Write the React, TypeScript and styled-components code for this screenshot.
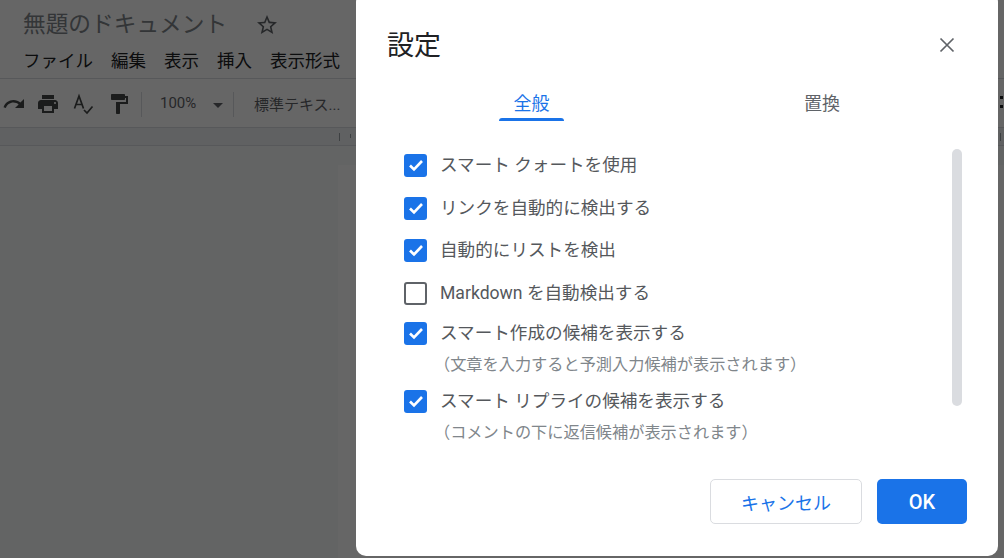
import styled, { createGlobalStyle } from "styled-components"

const GlobalStyle = createGlobalStyle`
  html, body {
    margin: 0;
    padding: 0;
    height: 100%;
    overflow: hidden;
    background: #fff;
    font-family: Roboto, "Noto Sans CJK JP", sans-serif;
  }
  #root {
    height: 100%;
  }
`

const Page = styled.div`
  position: relative;
  width: 1004px;
  height: 558px;
  overflow: hidden;
  display: flex;
  flex-direction: column;
`

const Header = styled.header`
  height: 79px;
  flex: none;
  box-sizing: border-box;
  padding: 10px 0 0 23px;
  border-bottom: 1px solid #dadce0;
`

const TitleRow = styled.div`
  display: flex;
  align-items: center;
  gap: 28px;
  height: 30px;
`

const DocTitle = styled.div`
  font-size: 22.7px;
  line-height: 30px;
  color: #80868b;
`

const MenuRow = styled.nav`
  display: flex;
  gap: 18px;
  margin-top: 8px;
`

const MenuItem = styled.span`
  font-size: 17.5px;
  line-height: 26px;
  color: #202124;
`

const Toolbar = styled.div`
  height: 49px;
  flex: none;
  box-sizing: border-box;
  padding: 2px 0 0 2px;
  display: flex;
  align-items: center;
  color: #444746;
  border-bottom: 1px solid #dadce0;
`

const ToolIcon = styled.svg<{ $gap: number }>`
  width: 24px;
  height: 24px;
  flex: none;
  margin-right: ${(p) => p.$gap}px;
  fill: currentColor;
`

const Divider = styled.div`
  width: 1px;
  height: 25px;
  background: #dadce0;
`

const Zoom = styled.span`
  font-size: 15px;
  color: #5f6368;
  margin: 0 0 2px 18px;
  width: 44px;
`

const Caret = styled.i`
  width: 0;
  height: 0;
  margin: 2px 10px 0 9px;
  border-left: 5px solid transparent;
  border-right: 5px solid transparent;
  border-top: 5px solid #5f6368;
`

const StyleLabel = styled.span`
  font-size: 15px;
  color: #5f6368;
  margin: 0 0 2px 20px;
  white-space: nowrap;
`

const MoreDots = styled.i`
  margin: 0 1px 5px auto;
  width: 3px;
  height: 18px;
  background: radial-gradient(circle, #202124 1.5px, transparent 1.6px) 0 0 / 3px 9px repeat-y;
`

const Ruler = styled.div`
  height: 18px;
  flex: none;
  box-sizing: border-box;
  background: #f1f3f4;
  border-bottom: 1px solid #dadce0;
  display: flex;
  padding-left: 339px;
`

const RulerTick = styled.i<{ $short?: boolean; $end?: boolean }>`
  width: 1px;
  height: ${(p) => (p.$short ? 4 : 8)}px;
  margin-top: ${(p) => (p.$short ? 6 : 5)}px;
  margin-left: ${(p) => (p.$short ? 10 : p.$end ? 649 : 0)}px;
  background: #9aa0a6;
`

const Canvas = styled.main`
  flex: 1;
  background: #f8f9fa;
  padding: 19px 0 0 338px;
`

const Sheet = styled.div`
  height: 100%;
  background: #fff;
`

const Scrim = styled.div`
  position: absolute;
  inset: 0;
  background: rgba(0, 0, 0, 0.6);
`

const Dialog = styled.section`
  position: absolute;
  left: 356px;
  top: -8px;
  width: 642px;
  height: 564px;
  box-sizing: border-box;
  padding: 8px 0 0;
  background: #fff;
  border-radius: 10px;
  display: flex;
  flex-direction: column;
`

const DialogHead = styled.div`
  display: flex;
  align-items: center;
  justify-content: space-between;
  height: 90px;
  flex: none;
  padding: 0 41px 0 31px;
`

const DialogTitle = styled.h2`
  margin: 2px 0 0;
  font-size: 27px;
  line-height: 36px;
  font-weight: 400;
  color: #202124;
`

const CloseButton = styled.button`
  width: 20px;
  height: 20px;
  padding: 0;
  border: none;
  background: none;
  color: #5f6368;
  display: flex;
`

const Tabs = styled.div`
  display: grid;
  grid-template-columns: 176px 290px;
  flex: none;
  height: 31px;
  margin-left: 88px;
`

const Tab = styled.div<{ $active?: boolean }>`
  position: relative;
  text-align: center;
  font-size: 18px;
  line-height: 28px;
  color: ${(p) => (p.$active ? "#1a73e8" : "#5f6368")};
  ${(p) => (p.$active ? "width: 65px; margin-left: 55px;" : "width: 36px; margin-left: 184px;")}

  &::after {
    content: "";
    display: ${(p) => (p.$active ? "block" : "none")};
    position: absolute;
    left: 0;
    right: 0;
    bottom: 0;
    height: 3px;
    background: #1a73e8;
    border-radius: 3px 3px 0 0;
  }
`

const Body = styled.div`
  position: relative;
  height: 317px;
  flex: none;
  box-sizing: border-box;
  padding: 31px 0 0 48px;
`

const ScrollThumb = styled.div`
  position: absolute;
  left: 596px;
  top: 28px;
  width: 10px;
  height: 257px;
  border-radius: 5px;
  background: #dadce0;
`

const OptionList = styled.div`
  display: flex;
  flex-direction: column;
`

const Option = styled.div<{ $gap: number }>`
  display: flex;
  align-items: center;
  gap: 13px;
  height: 26px;
  margin-bottom: ${(p) => p.$gap}px;
`

const Box = styled.span<{ $checked: boolean }>`
  width: 23px;
  height: 23px;
  flex: none;
  box-sizing: border-box;
  border-radius: 3px;
  display: flex;
  align-items: center;
  justify-content: center;
  background: ${(p) => (p.$checked ? "#1a73e8" : "#fff")};
  border: ${(p) => (p.$checked ? "none" : "2px solid #5f6368")};
`

const Label = styled.span`
  font-size: 17.6px;
  line-height: 26px;
  color: #55585c;
  white-space: nowrap;
`

const Hint = styled.div<{ $gap: number }>`
  font-size: 16.2px;
  line-height: 20px;
  color: #80868b;
  margin: 9px 0 ${(p) => p.$gap}px 30px;
  white-space: nowrap;
`

const Footer = styled.div`
  display: flex;
  justify-content: flex-end;
  gap: 15px;
  padding: 41px 31px 0 0;
`

const ButtonBase = styled.button`
  height: 45px;
  box-sizing: border-box;
  border-radius: 5px;
  font-family: inherit;
`

const CancelButton = styled(ButtonBase)`
  width: 152px;
  background: #fff;
  border: 1px solid #dadce0;
  color: #1a73e8;
  font-size: 18px;
`

const OkButton = styled(ButtonBase)`
  width: 90px;
  background: #1a73e8;
  border: none;
  color: #fff;
  font-size: 20px;
  font-weight: 500;
`

const options = [
  { label: "スマート クォートを使用", gap: 17 },
  { label: "リンクを自動的に検出する", gap: 16 },
  { label: "自動的にリストを検出", gap: 17 },
  { label: "Markdown を自動検出する", off: true, gap: 14 },
  { label: "スマート作成の候補を表示する", hint: "（文章を入力すると予測入力候補が表示されます）", gap: 13 },
  { label: "スマート リプライの候補を表示する", hint: "（コメントの下に返信候補が表示されます）", gap: 0 },
]

export default function App() {
  return (
    <Page>
      <GlobalStyle />
      <Header>
        <TitleRow>
          <DocTitle>無題のドキュメント</DocTitle>
          <svg width="24" height="24" viewBox="0 0 24 24" fill="#5f6368">
            <path d="M22 9.24l-7.19-.62L12 2 9.19 8.63 2 9.24l5.46 4.73L5.82 21 12 17.27 18.18 21l-1.63-7.03L22 9.24zM12 15.4l-3.76 2.27 1-4.28-3.32-2.88 4.38-.38L12 6.1l1.71 4.04 4.38.38-3.32 2.88 1 4.28L12 15.4z" />
          </svg>
        </TitleRow>
        <MenuRow>
          <MenuItem>ファイル</MenuItem>
          <MenuItem>編集</MenuItem>
          <MenuItem>表示</MenuItem>
          <MenuItem>挿入</MenuItem>
          <MenuItem>表示形式</MenuItem>
        </MenuRow>
      </Header>
      <Toolbar>
        <ToolIcon $gap={10} viewBox="0 0 24 24">
          <path d="M18.4 10.6C16.55 8.99 14.15 8 11.5 8c-4.65 0-8.58 3.03-9.96 7.22L3.9 16c1.05-3.19 4.05-5.5 7.6-5.5 1.95 0 3.73.72 5.12 1.88L13 16h9V7l-3.6 3.6z" />
        </ToolIcon>
        <ToolIcon $gap={11} viewBox="0 0 24 24">
          <path d="M19 8H5c-1.66 0-3 1.34-3 3v6h4v4h12v-4h4v-6c0-1.66-1.34-3-3-3zm-3 11H8v-5h8v5zm3-7c-.55 0-1-.45-1-1s.45-1 1-1 1 .45 1 1-.45 1-1 1zm-1-9H6v4h12V3z" />
        </ToolIcon>
        <ToolIcon $gap={12} viewBox="0 0 24 24">
          <g fill="none" stroke="currentColor" strokeWidth="1.7">
            <path d="M3.5 16.5L8 4l4.5 12.5M5 12.5h6" />
            <path d="M13 18l3 3 5.5-6.5" />
          </g>
        </ToolIcon>
        <ToolIcon $gap={10} viewBox="0 0 24 24">
          <path d="M18 4V3c0-.55-.45-1-1-1H5c-.55 0-1 .45-1 1v4c0 .55.45 1 1 1h12c.55 0 1-.45 1-1V6h1v4H9v11c0 .55.45 1 1 1h2c.55 0 1-.45 1-1v-9h8V4h-3z" />
        </ToolIcon>
        <Divider />
        <Zoom>100%</Zoom>
        <Caret />
        <Divider />
        <StyleLabel>標準テキス...</StyleLabel>
        <MoreDots />
      </Toolbar>
      <Ruler>
        <RulerTick />
        <RulerTick $short />
        <RulerTick $end />
      </Ruler>
      <Canvas>
        <Sheet />
      </Canvas>
      <Scrim />
      <Dialog>
        <DialogHead>
          <DialogTitle>設定</DialogTitle>
          <CloseButton aria-label="閉じる">
            <svg width="20" height="20" viewBox="0 0 20 20" fill="none" stroke="currentColor" strokeWidth="1.7">
              <path d="M3.5 3.5l13 13M16.5 3.5l-13 13" />
            </svg>
          </CloseButton>
        </DialogHead>
        <Tabs>
          <Tab $active>全般</Tab>
          <Tab>置換</Tab>
        </Tabs>
        <Body>
          <OptionList>
            {options.map((o) => (
              <div key={o.label}>
                <Option $gap={o.hint ? 0 : o.gap}>
                  <Box $checked={!o.off}>
                    {!o.off && (
                      <svg width="16" height="16" viewBox="0 0 16 16" fill="none" stroke="#fff" strokeWidth="2.6">
                        <path d="M2 8.5l4 4L14 4" />
                      </svg>
                    )}
                  </Box>
                  <Label>{o.label}</Label>
                </Option>
                {o.hint && <Hint $gap={o.gap}>{o.hint}</Hint>}
              </div>
            ))}
          </OptionList>
          <ScrollThumb />
        </Body>
        <Footer>
          <CancelButton>キャンセル</CancelButton>
          <OkButton>OK</OkButton>
        </Footer>
      </Dialog>
    </Page>
  )
}
